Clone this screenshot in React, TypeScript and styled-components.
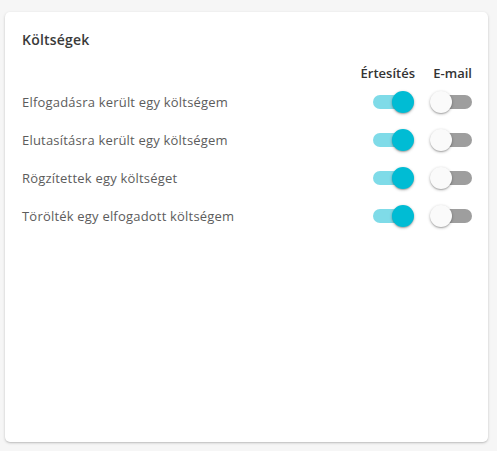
import { Fragment } from "react";
import styled, { createGlobalStyle } from "styled-components";

const GlobalStyle = createGlobalStyle`
  html, body {
    margin: 0;
    padding: 0;
    background: #f6f6f6;
  }
  body {
    font-family: "Open Sans", "Liberation Sans", sans-serif;
  }
`;

const Page = styled.div`
  padding: 12px 9px 9px 5px;
`;

const Card = styled.div`
  box-sizing: border-box;
  height: 430px;
  background: #fff;
  border-radius: 5px;
  box-shadow: 0 1px 3px rgba(0, 0, 0, 0.18), 0 1px 1px rgba(0, 0, 0, 0.08);
  padding: 18px 16px 0 17px;
`;

const Title = styled.h2`
  margin: 0 0 13px;
  font-size: 14px;
  font-weight: 600;
  letter-spacing: 0.2px;
  line-height: 20px;
  color: #3a3a3a;
`;

const Grid = styled.div`
  display: grid;
  grid-template-columns: 1fr auto auto;
  column-gap: 15px;
  align-items: center;
`;

const HeadCell = styled.div`
  justify-self: end;
  font-size: 13px;
  font-weight: 600;
  line-height: 20px;
  color: #333;
`;

const Label = styled.div`
  font-size: 13px;
  letter-spacing: 0.2px;
  line-height: 38px;
  color: #5c5c5c;
`;

const SwitchCell = styled.div`
  justify-self: end;
`;

const SwitchRoot = styled.span`
  position: relative;
  display: block;
  width: 42px;
  height: 22px;
`;

const Track = styled.span<{ $on: boolean }>`
  position: absolute;
  left: ${(p) => (p.$on ? "0" : "2px")};
  right: ${(p) => (p.$on ? "2px" : "0")};
  top: 4px;
  height: 14px;
  border-radius: 7px;
  background: ${(p) => (p.$on ? "#7fdbe8" : "#9e9e9e")};
`;

const Thumb = styled.span<{ $on: boolean }>`
  position: absolute;
  top: 0;
  left: ${(p) => (p.$on ? "19px" : "0")};
  width: 22px;
  height: 22px;
  border-radius: 50%;
  background: ${(p) => (p.$on ? "#00bcd4" : "#fafafa")};
  box-shadow: 0 1px 3px rgba(0, 0, 0, 0.3), 0 1px 1px rgba(0, 0, 0, 0.14);
`;

const Switch = ({ on }: { on: boolean }) => (
  <SwitchCell>
    <SwitchRoot>
      <Track $on={on} />
      <Thumb $on={on} />
    </SwitchRoot>
  </SwitchCell>
);

const rows = [
  "Elfogadásra került egy költségem",
  "Elutasításra került egy költségem",
  "Rögzítettek egy költséget",
  "Törölték egy elfogadott költségem",
];

const App = () => (
  <>
    <GlobalStyle />
    <Page>
      <Card>
        <Title>Költségek</Title>
        <Grid>
          <span />
          <HeadCell>Értesítés</HeadCell>
          <HeadCell>E-mail</HeadCell>
          {rows.map((r) => (
            <Fragment key={r}>
              <Label>{r}</Label>
              <Switch on={true} />
              <Switch on={false} />
            </Fragment>
          ))}
        </Grid>
      </Card>
    </Page>
  </>
);

export default App;
